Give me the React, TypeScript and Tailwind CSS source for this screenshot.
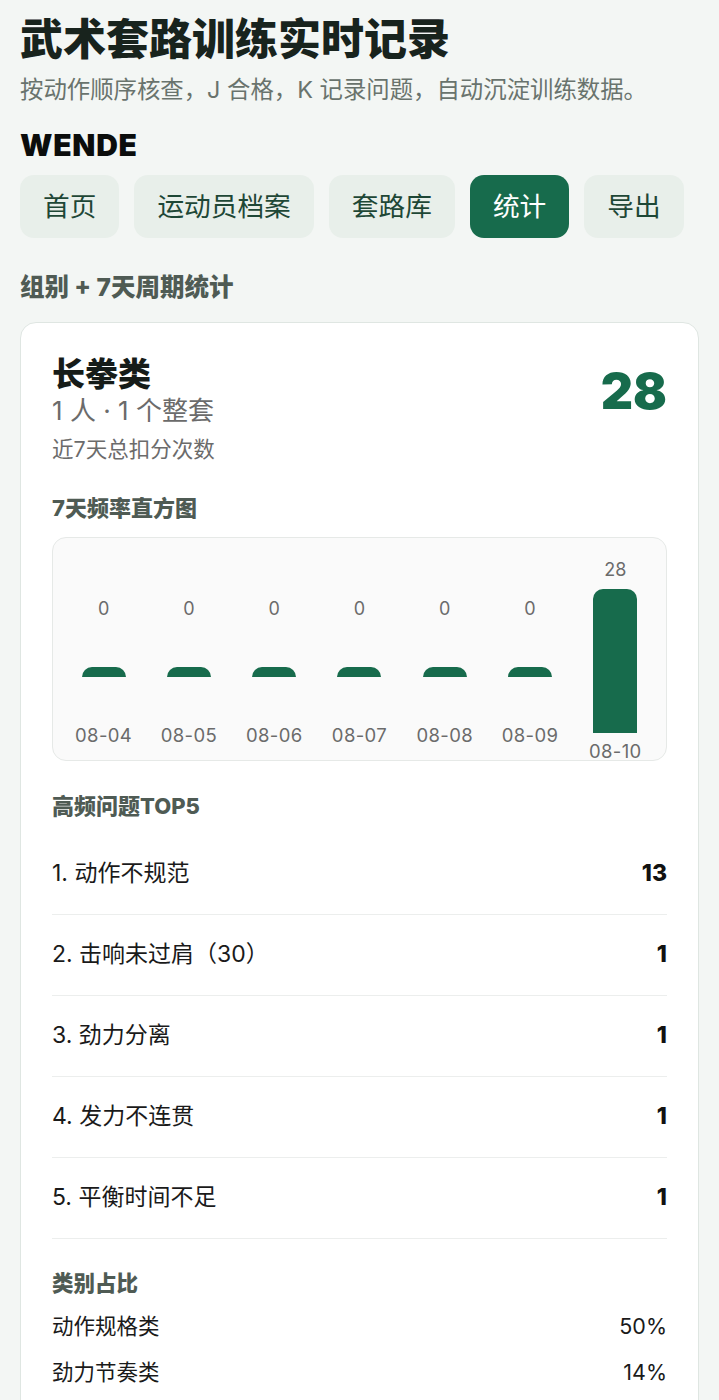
import React from 'react';

const NAV = ['首页', '运动员档案', '套路库', '统计', '导出'];
const ACTIVE = '统计';

const DAYS = [
  { date: '08-04', count: 0 },
  { date: '08-05', count: 0 },
  { date: '08-06', count: 0 },
  { date: '08-07', count: 0 },
  { date: '08-08', count: 0 },
  { date: '08-09', count: 0 },
  { date: '08-10', count: 28 },
];

const TOP5 = [
  { name: '1. 动作不规范', count: 13 },
  { name: '2. 击响未过肩（30）', count: 1 },
  { name: '3. 劲力分离', count: 1 },
  { name: '4. 发力不连贯', count: 1 },
  { name: '5. 平衡时间不足', count: 1 },
];

const CATS = [
  { name: '动作规格类', pct: '50%' },
  { name: '劲力节奏类', pct: '14%' },
];

function Bar({ date, count, max }: { date: string; count: number; max: number }) {
  // zero days get a small stub, placed in the middle of the column
  if (count === 0) {
    return (
      <div className="flex-1 flex flex-col items-center mt-[39px]">
        <span className="text-[18px] leading-[20px] text-[#6b6b6b]">{count}</span>
        <div className="mt-[48px] w-[44px] h-[10px] rounded-t-[10px] bg-[#176b4c]" />
        <span className="mt-[48px] text-[18.5px] leading-[20px] tracking-[0.02em] text-[#6b6b6b]">{date}</span>
      </div>
    );
  }
  return (
    <div className="flex-1 flex flex-col items-center">
      <span className="text-[18px] leading-[20px] text-[#6b6b6b]">{count}</span>
      <div
        className="mt-[9px] w-[44px] rounded-t-[10px] bg-[#176b4c]"
        style={{ height: Math.round((count / max) * 144) }}
      />
      <span className="mt-[8px] text-[18.5px] leading-[20px] tracking-[0.02em] text-[#6b6b6b]">{date}</span>
    </div>
  );
}

export default function App() {
  const max = Math.max(...DAYS.map((d) => d.count));

  return (
    <div className="min-h-[1400px] bg-[#f3f6f4] px-5 pt-[14px] font-[family-name:Inter,'Noto_Sans_CJK_SC',sans-serif] text-[#18231d]">
      <h1 className="text-[43px] leading-[50px] font-black">武术套路训练实时记录</h1>
      <p className="mt-[10px] text-[23.4px] leading-[32px] text-[#69736d]">
        按动作顺序核查，J 合格，K 记录问题，自动沉淀训练数据。
      </p>
      <div className="mt-[22px] text-[30px] leading-[34px] font-black tracking-wide text-[#0b0d0c]">WENDE</div>

      <nav className="mt-[13px] flex gap-[15px]">
        {NAV.map((n) => (
          <button
            key={n}
            className={`h-[63px] px-[23px] rounded-[14px] text-[26.7px] ${
              n === ACTIVE ? 'bg-[#176b4c] text-white' : 'bg-[#e8efea] text-[#1e4736]'
            }`}
          >
            {n}
          </button>
        ))}
      </nav>

      <h2 className="mt-[34px] text-[24.5px] leading-[30px] font-extrabold text-[#4f5b54]">组别 + 7天周期统计</h2>

      <div className="mt-[20px] bg-white border border-[#dfe6e2] rounded-[16px] p-[31px]">
        <div className="flex justify-between items-start">
          <div>
            <div className="text-[33px] leading-[40px] font-black text-[#161c19]">长拳类</div>
            <div className="text-[26px] leading-[34px] text-[#6b6b6b]">1 人 · 1 个整套</div>
            <div className="mt-[7px] text-[21.5px] leading-[28px] text-[#6b6b6b]">近7天总扣分次数</div>
          </div>
          <div className="mt-[12px] text-[50px] leading-[50px] font-black text-[#176b4c]">28</div>
        </div>

        <div className="mt-[32px] text-[22px] leading-[26px] font-extrabold text-[#4f5b54]">7天频率直方图</div>
        <div className="mt-[16px] h-[224px] bg-[#fafafa] border border-[#e6e9e7] rounded-[14px] px-[8px] pt-[22px] flex items-start">
          {DAYS.map((d) => (
            <Bar key={d.date} date={d.date} count={d.count} max={max} />
          ))}
        </div>

        <div className="mt-[32px] text-[22px] leading-[26px] font-extrabold text-[#4f5b54]">高频问题TOP5</div>
        <div className="mt-[15px]">
          {TOP5.map((t) => (
            <div key={t.name} className="h-[81px] border-b border-[#eceeed] flex items-center justify-between pb-px">
              <span className="text-[23px] text-[#1a1a1a]">{t.name}</span>
              <span className="text-[23px] font-extrabold text-[#111]">{t.count}</span>
            </div>
          ))}
        </div>

        <div className="mt-[31px] text-[21.5px] leading-[26px] font-extrabold text-[#4f5b54]">类别占比</div>
        <div className="mt-[16px] flex flex-col gap-[18px]">
          {CATS.map((c) => (
            <div key={c.name} className="flex justify-between text-[21.5px] leading-[28px] text-[#1a1a1a]">
              <span>{c.name}</span>
              <span>{c.pct}</span>
            </div>
          ))}
        </div>
      </div>
    </div>
  );
}
